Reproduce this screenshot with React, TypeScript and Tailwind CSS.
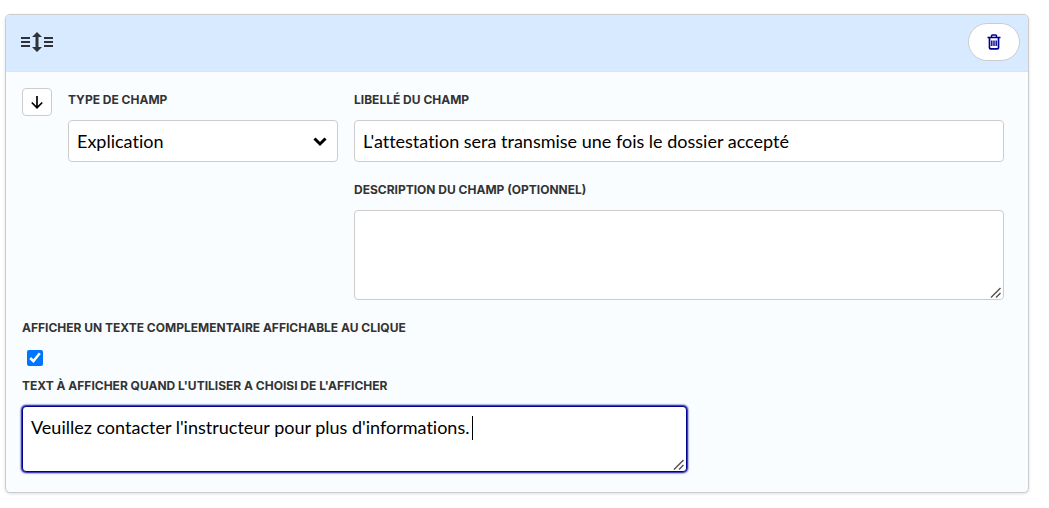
import { useId, useState, type ReactNode } from 'react';

const fieldClass =
  'block w-full rounded border border-[#ccc] bg-white px-2 text-lg leading-6 text-black outline-none [font-variant-ligatures:none]';

function Label({ htmlFor, children }: { htmlFor: string; children: ReactNode }) {
  return (
    <label htmlFor={htmlFor} className="block font-['Inter',sans-serif] text-xs leading-6 font-bold text-[#333] uppercase">
      {children}
    </label>
  );
}

function MoveHandleIcon() {
  return (
    <svg width="32" height="20" viewBox="0 0 32 20" fill="#2f3337" aria-hidden="true">
      <path d="M0 5h9v2H0zM0 9h9v2H0zM0 13h9v2H0zM23 5h9v2h-9zM23 9h9v2h-9zM23 13h9v2h-9z" />
      <path d="M16 0l5 5h-3.500v10H21l-5 5-5-5h3.500V5H11z" />
    </svg>
  );
}

function TrashIcon() {
  return (
    <svg width="14" height="16" viewBox="0 0 14 16" fill="none" stroke="#000091" aria-hidden="true">
      <path d="M0.500 3.500h13" strokeWidth="1.500" />
      <path d="M4.500 3V2a1 1 0 0 1 1-1h3a1 1 0 0 1 1 1v1" strokeWidth="1.500" />
      <path d="M2.500 3.500v10.200a1.200 1.200 0 0 0 1.200 1.200h6.600a1.200 1.200 0 0 0 1.200-1.200V3.500" strokeWidth="1.700" />
      <path d="M4.800 6.500v5.500M7 6.500v5.500M9.200 6.500v5.500" strokeWidth="1.400" />
    </svg>
  );
}

function ResizeGrip() {
  return (
    <svg
      className="pointer-events-none absolute right-px bottom-px rounded-br-sm bg-white"
      width="14"
      height="14"
      viewBox="0 0 14 14"
      fill="none"
      stroke="#555"
      strokeWidth="1.500"
      aria-hidden="true"
    >
      <path d="M2 12.500L11.500 3M7 12.500L11.500 8" />
    </svg>
  );
}

export default function App() {
  const id = useId();
  const [type, setType] = useState('explication');
  const [libelle, setLibelle] = useState("L'attestation sera transmise une fois le dossier accepté");
  const [description, setDescription] = useState('');
  const [collapsible, setCollapsible] = useState(true);
  const [notice, setNotice] = useState("Veuillez contacter l'instructeur pour plus d'informations. ");

  return (
    <main className="pt-3.5 pr-5 pb-3.5 pl-[5px] font-['Lato',sans-serif]">
      <section className="overflow-hidden rounded-[5px] border border-[#ccc] bg-[#f9fdff] shadow-[0_1px_3px_rgba(0,0,0,0.12)]">
        <header className="flex items-center justify-between border-b border-[#d5e5f3] bg-[#d8eaff] pt-2 pr-2 pb-2.5 pl-[15px]">
          <button type="button" aria-label="Déplacer le champ" className="cursor-move">
            <MoveHandleIcon />
          </button>
          <button
            type="button"
            aria-label="Supprimer"
            className="flex h-[38px] w-[52px] items-center justify-center rounded-full border border-[#ccc] bg-white"
          >
            <TrashIcon />
          </button>
        </header>

        <form className="px-4 pt-4 pb-5">
          <div className="flex items-start gap-4 pr-2">
            <button
              type="button"
              aria-label="Déplacer le champ vers le bas"
              className="flex h-7 w-[30px] shrink-0 items-center justify-center rounded border border-[#ccc] bg-white"
            >
              <svg width="12" height="13" viewBox="0 0 12 13" fill="none" stroke="#000" strokeWidth="1.700" aria-hidden="true">
                <path d="M6 0v12M0.800 6.500L6 11.800l5.200-5.300" />
              </svg>
            </button>

            <div className="flex w-[270px] shrink-0 flex-col gap-2">
              <Label htmlFor={`${id}-type`}>Type de champ</Label>
              <div className="relative">
                <select
                  id={`${id}-type`}
                  value={type}
                  onChange={(e) => setType(e.target.value)}
                  className={`${fieldClass} h-[42px] appearance-none`}
                >
                  <option value="explication">Explication</option>
                </select>
                <svg
                  className="pointer-events-none absolute top-[17px] right-[11px]"
                  width="14"
                  height="10"
                  viewBox="0 0 14 10"
                  fill="none"
                  stroke="#000"
                  strokeWidth="3"
                  aria-hidden="true"
                >
                  <path d="M1.500 1.500L7 7l5.500-5.500" />
                </svg>
              </div>
            </div>

            <div className="flex min-w-0 flex-1 flex-col gap-4">
              <div className="flex flex-col gap-2">
                <Label htmlFor={`${id}-libelle`}>Libellé du champ</Label>
                <input
                  id={`${id}-libelle`}
                  type="text"
                  value={libelle}
                  onChange={(e) => setLibelle(e.target.value)}
                  className={`${fieldClass} h-[42px]`}
                />
              </div>
              <div className="flex flex-col gap-2">
                <Label htmlFor={`${id}-description`}>Description du champ (optionnel)</Label>
                <div className="relative">
                  <textarea
                    id={`${id}-description`}
                    rows={3}
                    value={description}
                    onChange={(e) => setDescription(e.target.value)}
                    className={`${fieldClass} py-2`}
                  />
                  <ResizeGrip />
                </div>
              </div>
            </div>
          </div>

          <div className="mt-4">
            <Label htmlFor={`${id}-collapsible`}>Afficher un texte complementaire affichable au clique</Label>
            <input
              id={`${id}-collapsible`}
              type="checkbox"
              checked={collapsible}
              onChange={(e) => setCollapsible(e.target.checked)}
              className="mx-[5px] mt-2.5 mb-2 block size-4 accent-[#0075ff]"
            />
            <Label htmlFor={`${id}-notice`}>Text à afficher quand l'utiliser a choisi de l'afficher</Label>
            <div className="relative mt-2 max-w-[665px]">
              <textarea
                id={`${id}-notice`}
                rows={2}
                value={notice}
                onChange={(e) => setNotice(e.target.value)}
                className="block w-full rounded border border-[#000091] bg-white px-2 py-2 text-lg leading-6 text-black caret-transparent shadow-[0_0_2px_1px_#000091] outline-none [font-variant-ligatures:none]"
              />
              <ResizeGrip />
              <span className="absolute top-2.5 left-[450px] h-6 w-px bg-black" aria-hidden="true" />
            </div>
          </div>
        </form>
      </section>
    </main>
  );
}
